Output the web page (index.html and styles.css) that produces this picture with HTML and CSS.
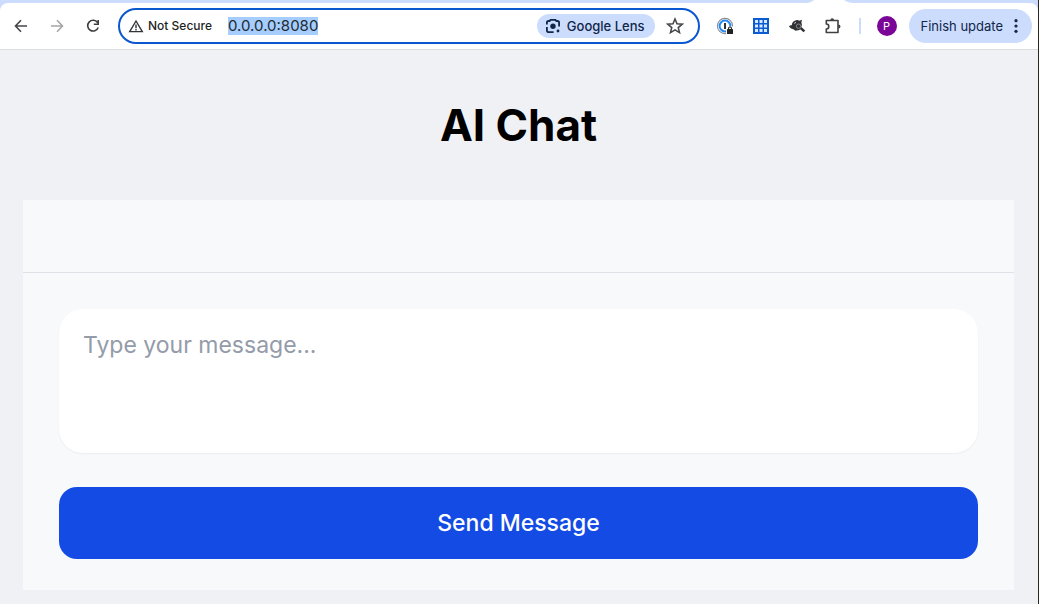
FILE: index.html
```html
<!DOCTYPE html>
<html lang="en">
<head>
<meta charset="utf-8">
<meta name="viewport" content="width=device-width, initial-scale=1">
<title>AI Chat</title>
<link rel="stylesheet" href="styles.css">
</head>
<body>
<div class="window">
  <header class="browser">
    <div class="tabstrip">
      <svg class="tab-foot" width="48" height="3" viewBox="0 0 48 3" aria-hidden="true"><path d="M0 3Q5 3 8 0H38Q42 3 48 3Z" fill="#fff"/></svg>
    </div>
    <div class="toolbar">
      <nav class="nav" aria-label="Navigation">
        <button class="icon-btn" type="button" aria-label="Back">
          <svg width="16" height="16" viewBox="0 0 16 16" fill="none" stroke="#45474a" stroke-width="1.6"><path d="M14 8H3M8 2.3L2.5 8L8 13.7"/></svg>
        </button>
        <button class="icon-btn" type="button" aria-label="Forward" disabled>
          <svg width="16" height="16" viewBox="0 0 16 16" fill="none" stroke="#a5a6a8" stroke-width="1.6"><path d="M2 8H13M8 2.3L13.5 8L8 13.7"/></svg>
        </button>
        <button class="icon-btn" type="button" aria-label="Reload">
          <svg width="16" height="16" viewBox="0 0 16 16" fill="none" stroke="#3c3e40" stroke-width="1.6"><path d="M12.6 4.6A5.4 5.4 0 1 0 13.2 9.5M13.2 2V6.3H8.8"/></svg>
        </button>
      </nav>
      <div class="omnibox">
        <button class="security" type="button">
          <svg width="16" height="14" viewBox="0 0 16 14" fill="none" stroke="#333538" stroke-width="1.4"><path d="M8 2L14.3 12.6H1.7Z"/><path d="M8 5.4V9.2M8 10V11.4"/></svg>
          <span>Not Secure</span>
        </button>
        <span class="address" role="textbox" aria-label="Address" tabindex="0"><mark class="selection">0.0.0.0:8080</mark></span>
        <button class="lens" type="button">
          <svg width="16" height="16" viewBox="0 0 16 16" fill="none" stroke="#10264a" stroke-width="1.8"><path d="M1.9 6.6V4.6Q1.9 3 3.6 3H4.6L5.6 1.8H10.4L11.4 3H12.4Q14.1 3 14.1 4.6V8.6M1.9 9V12.2Q1.9 14.1 3.8 14.1H8.6"/><circle cx="8" cy="8.2" r="2.7" fill="#10264a" stroke="none"/><circle cx="13" cy="13" r="1.4" fill="#10264a" stroke="none"/></svg>
          <span>Google Lens</span>
        </button>
        <button class="icon-btn" type="button" aria-label="Bookmark">
          <svg width="18" height="18" viewBox="0 0 16 16" fill="none" stroke="#45474a" stroke-width="1.4"><path d="M8 1.8L9.8 6L14.4 6.4L10.9 9.4L12 13.9L8 11.5L4 13.9L5.1 9.4L1.6 6.4L6.2 6Z"/></svg>
        </button>
      </div>
      <div class="extensions">
        <button class="icon-btn" type="button" aria-label="Password manager">
          <svg width="18" height="18" viewBox="0 0 18 18" fill="none"><circle cx="9" cy="9" r="7.6" fill="#fff" stroke="#8a8d91" stroke-width="1.1"/><circle cx="9" cy="9" r="5.4" stroke="#2589f5" stroke-width="2"/><path d="M9 6V12" stroke="#333" stroke-width="2"/><path d="M10 9.5H18V18H10Z" fill="#fff"/><rect x="11" y="12" width="6" height="5" rx=".6" fill="#222"/><path d="M12.5 12.5V11.5Q12.5 10 14 10T15.5 11.5V12.5" stroke="#222" stroke-width="1.1"/></svg>
        </button>
        <button class="icon-btn" type="button" aria-label="Grid extension">
          <svg width="16" height="16" viewBox="0 0 16 16"><path d="M0 0H16V16H0Z" fill="#0b5bd3"/><path d="M2 2H5V5H2ZM6.5 2H9.5V5H6.5ZM11 2H14V5H11ZM2 6.5H5V9.5H2ZM6.5 6.5H9.5V9.5H6.5ZM11 6.5H14V9.5H11ZM2 11H5V14H2ZM6.5 11H9.5V14H6.5ZM11 11H14V14H11Z" fill="#d8eaff"/></svg>
        </button>
        <button class="icon-btn" type="button" aria-label="Search extension">
          <svg width="18" height="16" viewBox="0 0 18 16" fill="none"><path d="M1 8.4Q2 6.8 3.8 7.3Q4 3.2 8 2.2Q10 1.8 11.5 2.8L14 1.8L13.4 4.4Q14.6 7 13.2 9.6L11.5 12L7.5 12.8L5.3 11.3L3 10.4Z" fill="#303236"/><path d="M12.6 10L16.4 13.4" stroke="#303236" stroke-width="2.4"/><circle cx="10.6" cy="8.2" r="2.2" stroke="#999" stroke-width=".8"/><path d="M6.3 5.4L8 4.4" stroke="#ddd"/></svg>
        </button>
        <button class="icon-btn" type="button" aria-label="Extensions">
          <svg width="18" height="18" viewBox="0 0 18 18" fill="none" stroke="#3f4144" stroke-width="1.6" stroke-linejoin="round"><path d="M2.3 3.5H14V15.5H2.3V12Q4.8 12 4.8 9.5T2.3 7Z"/><path d="M6.3 3.2Q6.3 1.2 8.2 1.2T10.1 3.2ZM14.3 7.6Q16.5 7.6 16.5 9.5T14.3 11.4Z" fill="#3f4144" stroke="none"/></svg>
        </button>
      </div>
      <span class="divider"></span>
      <button class="avatar" type="button" aria-label="Profile">P</button>
      <button class="update" type="button">
        <span>Finish update</span>
        <svg width="4" height="16" viewBox="0 0 4 16" fill="#10264a"><circle cx="2" cy="2.7" r="1.6"/><circle cx="2" cy="8" r="1.6"/><circle cx="2" cy="13.3" r="1.6"/></svg>
      </button>
    </div>
  </header>
  <main class="page">
    <h1 class="title">AI Chat</h1>
    <section class="chat">
      <div class="messages" role="log" aria-label="Messages"></div>
      <form class="composer">
        <textarea class="message" aria-label="Message" placeholder="Type your message..."></textarea>
        <button class="send" type="button">Send Message</button>
      </form>
    </section>
  </main>
</div>
</body>
</html>
```
FILE: styles.css
```css
* { box-sizing: border-box; }

body {
  margin: 0;
  background: #f0f1f5;
  font-family: Inter, "Liberation Sans", sans-serif;
  color: #000;
}

button, textarea { font: inherit; border: 0; }

button {
  display: flex;
  align-items: center;
  justify-content: center;
  padding: 0;
  background: none;
  color: inherit;
}

svg { flex: none; }

.window {
  min-height: 100vh;
  border-right: 1px solid #29271f;
}

.browser {
  background: #ccdcfc;
  border-bottom: 1px solid #dcdfdf;
}

.tabstrip {
  display: flex;
  justify-content: flex-end;
  height: 3px;
  padding-right: 184px;
}

.toolbar {
  display: flex;
  align-items: center;
  height: 46px;
  padding: 0 6px 0 9px;
  background: #fff;
  border-radius: 8px 8px 0 0;
  font-size: 13px;
  line-height: 20px;
}

.nav, .extensions { display: flex; gap: 12px; }

.icon-btn { width: 24px; height: 24px; }

.omnibox {
  display: flex;
  flex: 1;
  align-items: center;
  height: 36px;
  margin: 0 13px;
  padding: 0 11px 0 8px;
  border: 2px solid #0b57d0;
  border-radius: 18px;
}

.security {
  gap: 4px;
  font-size: 12px;
  font-weight: 500;
  color: #1f1f1f;
}

.address {
  flex: 1;
  margin-left: 16px;
  font-size: 15px;
  line-height: 18px;
  outline: 0;
}

.selection {
  display: inline-block;
  background: #a5cdff;
  color: #1f2a30;
}

.lens {
  gap: 6px;
  height: 24px;
  margin-right: 8px;
  padding: 0 10px 0 8px;
  border-radius: 12px;
  background: #ccdcfc;
  color: #10264a;
  font-weight: 500;
}

.divider {
  width: 2px;
  height: 16px;
  margin: 0 16px 0 14px;
  background: #ccdcfc;
}

.avatar {
  width: 20px;
  height: 20px;
  border-radius: 50%;
  background: #7b0597;
  color: #fff;
  font-size: 11px;
}

.update {
  gap: 11px;
  height: 34px;
  margin-left: 12px;
  padding: 0 14px 0 12px;
  border-radius: 17px;
  background: #ccdcfc;
  color: #10264a;
}

.page { padding: 0 24px 14px 23px; }

.title {
  margin: 0;
  padding: 47px 0;
  font-size: 44px;
  font-weight: 700;
  line-height: 56px;
  text-align: center;
}

.chat { background: #f8f9fb; }

.messages {
  min-height: 73px;
  border-bottom: 1px solid #e0e2e7;
}

.composer {
  display: flex;
  flex-direction: column;
  gap: 34px;
  padding: 36px 36px 31px;
}

.message {
  display: block;
  width: 100%;
  height: 144px;
  padding: 18px 24px;
  border-radius: 24px;
  background: #fff;
  box-shadow: 0 1px 2px #0000000d;
  font-size: 23px;
  line-height: 36px;
  resize: none;
  outline: 0;
}

.message::placeholder { color: #949ba9; opacity: 1; }

.send {
  height: 72px;
  border-radius: 18px;
  background: #144be4;
  color: #fff;
  font-size: 23px;
  font-weight: 500;
}
```
